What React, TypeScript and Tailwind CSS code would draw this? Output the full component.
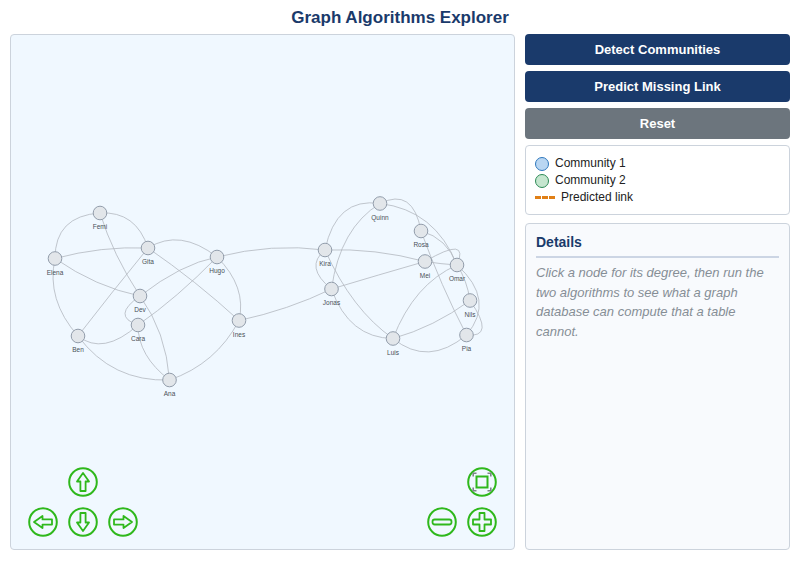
const nodes: [string, number, number][] = [
  ["Femi", 100, 213], ["Elena", 55, 258.5], ["Gita", 148, 248], ["Hugo", 217, 257], ["Dev", 140, 296],
  ["Cara", 138, 325], ["Ben", 78, 336], ["Ines", 239, 320.5], ["Ana", 169.5, 380], ["Kira", 325, 250],
  ["Quinn", 380, 203.5], ["Rosa", 421, 231], ["Mei", 425, 261.5], ["Omar", 457, 265], ["Jonas", 331.5, 289],
  ["Nils", 470, 300.5], ["Pia", 466.5, 335], ["Luis", 393, 338.5],
];
const pos = Object.fromEntries(nodes.map(([n, x, y]) => [n, [x, y]]));
const edges: [string, string, number, number][] = [
  ["Femi", "Elena", 55, 216], ["Femi", "Gita", 136, 211], ["Femi", "Dev", 113, 255], ["Elena", "Gita", 101, 246],
  ["Elena", "Dev", 96, 287], ["Elena", "Ben", 46, 300], ["Gita", "Ben", 112, 292], ["Gita", "Hugo", 180, 228],
  ["Gita", "Ines", 196, 281], ["Hugo", "Dev", 181, 264], ["Hugo", "Cara", 177, 298], ["Hugo", "Ines", 247, 287],
  ["Dev", "Cara", 111, 316], ["Dev", "Ana", 166, 332], ["Cara", "Ben", 103, 356], ["Cara", "Ana", 138, 356],
  ["Ben", "Ana", 112, 382], ["Ines", "Ana", 216, 364], ["Hugo", "Kira", 272, 243], ["Kira", "Mei", 375, 248],
  ["Ines", "Jonas", 288, 310], ["Kira", "Quinn", 336, 197], ["Kira", "Jonas", 304, 267], ["Kira", "Luis", 352, 310],
  ["Quinn", "Jonas", 340, 228], ["Quinn", "Rosa", 413, 187], ["Quinn", "Omar", 435, 210], ["Rosa", "Omar", 447, 238],
  ["Rosa", "Pia", 441, 286], ["Mei", "Omar", 441, 264], ["Mei", "Omar", 470, 235], ["Mei", "Jonas", 378, 275],
  ["Omar", "Luis", 414, 284], ["Omar", "Nils", 467, 280], ["Omar", "Pia", 496, 300], ["Nils", "Pia", 496, 338],
  ["Nils", "Luis", 434, 327], ["Pia", "Luis", 428, 367], ["Jonas", "Luis", 349, 338],
];

function Nav({ children, className = "" }: { children: React.ReactNode; className?: string }) {
  return (
    <div className={`w-[30px] h-[30px] ${className}`}>
      <svg viewBox="0 0 30 30" className="w-full h-full block">
        <circle cx="15" cy="15" r="13.8" fill="none" stroke="#2fb81c" strokeWidth="2" />
        <g fill="none" stroke="#2fb81c" strokeWidth="1.8" strokeLinejoin="round" strokeLinecap="round">{children}</g>
      </svg>
    </div>
  );
}
const up = "M15 6 L21 14.5 L17.6 14.5 L17.6 24 L12.4 24 L12.4 14.5 L9 14.5 Z";

export default function App() {
  return (
    <div className="w-[800px] h-[562px] bg-white flex flex-col px-[10px] font-['Liberation_Sans',Arial,sans-serif] overflow-hidden">
      <h1 className="h-[34px] pt-[1px] flex items-center justify-center text-[17px] font-bold text-[#1a3a6b]">
        Graph Algorithms Explorer
      </h1>
      <div className="flex gap-[10px] h-[516px]">
        <div className="relative w-[505px] bg-[#f0f8ff] border border-[#ccd3dc] rounded-[4px] overflow-hidden">
          <svg viewBox="11 35 503 514" className="absolute inset-0 w-full h-full">
            {edges.map(([a, b, cx, cy], i) => (
              <path key={i} d={`M${pos[a][0]} ${pos[a][1]} Q${cx} ${cy} ${pos[b][0]} ${pos[b][1]}`} fill="none" stroke="#b2b8bf" strokeWidth="0.8" />
            ))}
            {nodes.map(([n, x, y]) => (
              <g key={n}>
                <circle cx={x} cy={y} r="6.8" fill="#e2e6ea" stroke="#929dab" strokeWidth="1" />
                <text x={x} y={y + 16.4} textAnchor="middle" fontSize="6.5" fill="#495057" fontFamily="Liberation Sans, Arial, sans-serif">{n}</text>
              </g>
            ))}
          </svg>
          <div className="absolute left-[17px] bottom-[12px] grid grid-cols-[30px_30px_30px] gap-[10px]">
            <Nav className="col-start-2"><path d={up} /></Nav>
            <Nav className="col-start-1"><path d={up} transform="rotate(-90 15 15)" /></Nav>
            <Nav><path d={up} transform="rotate(180 15 15)" /></Nav>
            <Nav><path d={up} transform="rotate(90 15 15)" /></Nav>
          </div>
          <div className="absolute left-[416px] bottom-[12px] grid grid-cols-[30px_30px] gap-[10px]">
            <Nav className="col-start-2">
              <rect x="9.5" y="9.5" width="11" height="11" strokeWidth="2" strokeLinejoin="miter" />
              <path d="M6.2 9.5 V6.2 H9.5 M20.5 6.2 H23.8 V9.5 M23.8 20.5 V23.8 H20.5 M9.5 23.8 H6.2 V20.5" stroke="#7d8388" strokeWidth="1.6" strokeLinecap="butt" strokeLinejoin="miter" />
            </Nav>
            <Nav className="col-start-1"><rect x="5.5" y="12.5" width="19" height="5" rx="2.2" /></Nav>
            <Nav><path d="M12.5 6 H17.5 V12.5 H24 V17.5 H17.5 V24 H12.5 V17.5 H6 V12.5 H12.5 Z" /></Nav>
          </div>
        </div>
        <div className="w-[265px] flex flex-col">
          <div className="flex flex-col gap-[6px]">
            <button className="h-[31px] pt-[1px] rounded-[4px] bg-[#1a3a6b] text-white text-[13px] font-bold">Detect Communities</button>
            <button className="h-[31px] pt-[1px] rounded-[4px] bg-[#1a3a6b] text-white text-[13px] font-bold">Predict Missing Link</button>
            <button className="h-[31px] pt-[1px] rounded-[4px] bg-[#6c757d] text-white text-[13px] font-bold">Reset</button>
            <div className="h-[70px] bg-white border border-[#ccd3dc] rounded-[4px] px-[9px] pt-[9px] text-[12px] text-[#222] leading-[17px]">
              <div className="flex items-center gap-[6px]">
                <span className="w-[14px] h-[14px] rounded-full bg-[#b9d6f2] border border-[#2f78bd]" />
                Community 1
              </div>
              <div className="flex items-center gap-[6px]">
                <span className="w-[14px] h-[14px] rounded-full bg-[#c5e6cf] border border-[#2e8b57]" />
                Community 2
              </div>
              <div className="flex items-center gap-[6px]">
                <span className="w-[20px] border-t-[3px] border-dashed border-[#e07f16]" />
                Predicted link
              </div>
            </div>
          </div>
          <div className="mt-[8px] flex-1 bg-[#f8fafd] border border-[#ccd3dc] rounded-[4px] px-[10px] pt-[10px]">
            <h2 className="text-[14px] font-bold text-[#1a3a6b] leading-[17px] pb-[5px] border-b-2 border-[#ccd5e4]">Details</h2>
            <p className="mt-[5px] text-[13px] italic text-[#868e96] leading-[19.6px]">
              Click a node for its degree, then run the two algorithms to see what a graph database can compute that a table cannot.
            </p>
          </div>
        </div>
      </div>
    </div>
  );
}
